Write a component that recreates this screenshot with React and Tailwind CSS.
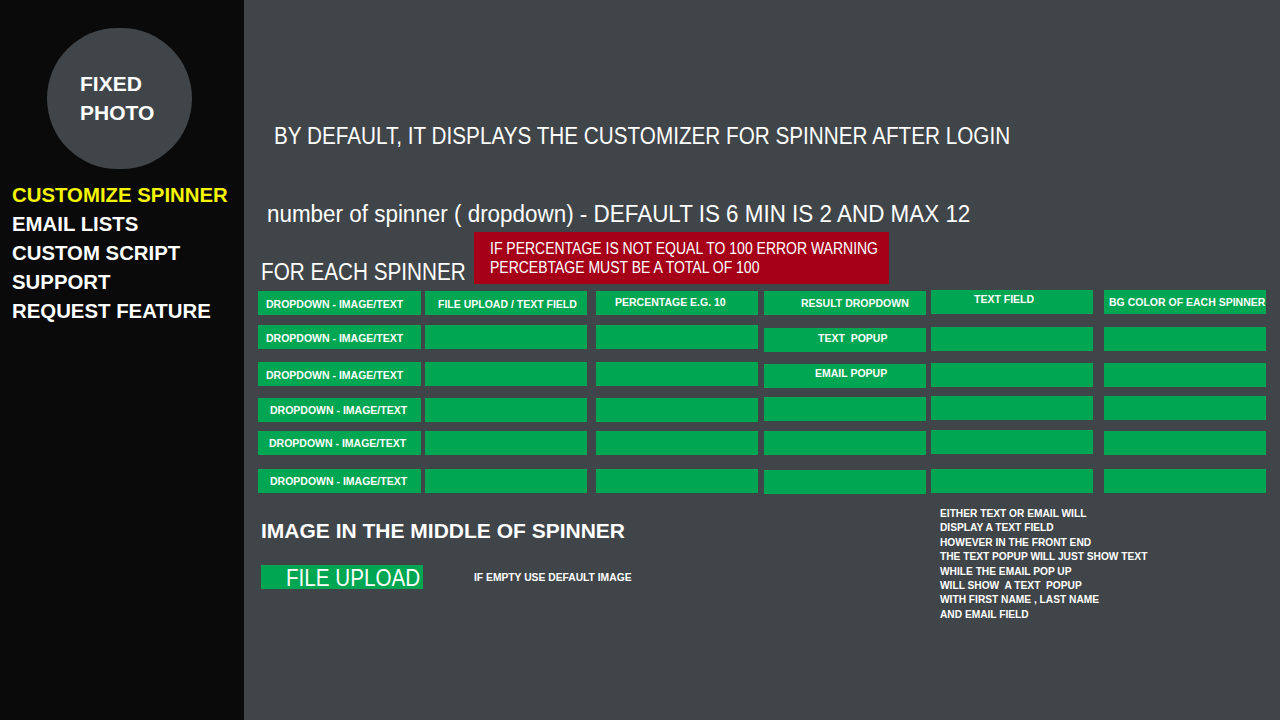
// each cell: [text, padding classes, small vertical nudge class]
const rows = [
  {
    top: "mt-[291px]",
    cells: [
      ["DROPDOWN - IMAGE/TEXT", "pl-[8px] pt-[3px]", ""],
      ["FILE UPLOAD / TEXT FIELD", "pl-[13px] pt-[3px]", ""],
      ["PERCENTAGE E.G. 10", "pl-[19px]", ""],
      ["RESULT DROPDOWN", "pl-[37px] pt-[1px]", ""],
      ["TEXT FIELD", "pl-[43px] pb-[4px]", "-translate-y-[1px]"],
      ["BG COLOR OF EACH SPINNER", "pl-[5px] pt-[2px]", "-translate-y-[1px]"],
    ],
  },
  {
    top: "mt-[10px]",
    cells: [
      ["DROPDOWN - IMAGE/TEXT", "pl-[8px] pt-[4px]", ""],
      ["", "", ""],
      ["", "", ""],
      ["TEXT  POPUP", "pl-[54px] pb-[3px]", "translate-y-[3px]"],
      ["", "", "translate-y-[2px]"],
      ["", "", "translate-y-[2px]"],
    ],
  },
  {
    top: "mt-[13px]",
    cells: [
      ["DROPDOWN - IMAGE/TEXT", "pl-[8px] pt-[3px]", ""],
      ["", "", ""],
      ["", "", ""],
      ["EMAIL POPUP", "pl-[51px] pb-[5px]", "translate-y-[2px]"],
      ["", "", "translate-y-[1px]"],
      ["", "", "translate-y-[1px]"],
    ],
  },
  {
    top: "mt-[12px]",
    cells: [
      ["DROPDOWN - IMAGE/TEXT", "pl-[12px] pt-[2px]", ""],
      ["", "", ""],
      ["", "", ""],
      ["", "", "-translate-y-[1px]"],
      ["", "", "-translate-y-[2px]"],
      ["", "", "-translate-y-[2px]"],
    ],
  },
  {
    top: "mt-[9px]",
    cells: [
      ["DROPDOWN - IMAGE/TEXT", "pl-[11px] pt-[2px]", ""],
      ["", "", ""],
      ["", "", ""],
      ["", "", ""],
      ["", "", "-translate-y-[1px]"],
      ["", "", ""],
    ],
  },
  {
    top: "mt-[14px]",
    cells: [
      ["DROPDOWN - IMAGE/TEXT", "pl-[12px] pt-[2px]", ""],
      ["", "", ""],
      ["", "", ""],
      ["", "", "translate-y-[1px]"],
      ["", "", ""],
      ["", "", ""],
    ],
  },
]

const colGaps = ["", "ml-[4px]", "ml-[9px]", "ml-[6px]", "ml-[5px]", "ml-[11px]"]

const navItems = ["CUSTOMIZE SPINNER", "EMAIL LISTS", "CUSTOM SCRIPT", "SUPPORT", "REQUEST FEATURE"]

const note = [
  "EITHER TEXT OR EMAIL WILL",
  "DISPLAY A TEXT FIELD",
  "HOWEVER IN THE FRONT END",
  "THE TEXT POPUP WILL JUST SHOW TEXT",
  "WHILE THE EMAIL POP UP",
  "WILL SHOW  A TEXT  POPUP",
  "WITH FIRST NAME , LAST NAME",
  "AND EMAIL FIELD",
]

function Cell({ text, pad, wide }) {
  return (
    <div
      className={`flex h-6 items-center whitespace-pre bg-[#00a651] text-[10.5px] font-bold text-white ${wide ? "w-[163px]" : "w-[162px]"} ${pad}`}
    >
      {text}
    </div>
  )
}

export default function App() {
  return (
    <div className="flex h-[720px] w-[1280px] overflow-hidden font-['Liberation_Sans',sans-serif] text-white">
      <aside className="flex w-[244px] shrink-0 flex-col bg-[#0a0a0a]">
        <div className="ml-[47px] mt-[28px] flex h-[141px] w-[145px] items-center rounded-full bg-[#3f4549] pl-[33px]">
          <p className="-mt-[2px] text-[21px] font-bold leading-[29px]">
            FIXED<br />PHOTO
          </p>
        </div>
        <nav className="ml-3 mt-[11px] flex flex-col text-[21px] font-bold leading-[29px]">
          {navItems.map((item, i) => (
            <span
              key={item}
              className={`origin-left scale-x-[0.97] whitespace-nowrap ${i === 0 ? "text-[#f5f500]" : "text-white"}`}
            >
              {item}
            </span>
          ))}
        </nav>
      </aside>

      <main className="relative flex-1 bg-[#3f4549]">
        <div className="flex flex-col items-start">
          <h1 className="ml-[30px] mt-[121px] origin-left scale-x-90 whitespace-nowrap text-[23px] leading-[30px]">
            BY DEFAULT, IT DISPLAYS THE CUSTOMIZER FOR SPINNER AFTER LOGIN
          </h1>
          <p className="ml-[23px] mt-[48px] origin-left scale-x-[0.975] whitespace-nowrap text-[23px] leading-[30px]">
            number of spinner ( dropdown) - DEFAULT IS 6 MIN IS 2 AND MAX 12
          </p>
        </div>

        <div className="absolute left-[230px] top-[232px] h-[52px] w-[415px] bg-[#a50018] px-4 pt-[7px] text-[16px] leading-[19px]">
          <p className="origin-left scale-x-[0.874] whitespace-nowrap">IF PERCENTAGE IS NOT EQUAL TO 100 ERROR WARNING</p>
          <p className="origin-left scale-x-[0.874] whitespace-nowrap">PERCEBTAGE MUST BE A TOTAL OF 100</p>
        </div>

        <h2 className="absolute left-[17px] top-[257px] origin-left scale-x-90 whitespace-nowrap text-[23px] leading-[30px]">
          FOR EACH SPINNER
        </h2>

        <div className="absolute left-[14px] top-0 flex flex-col">
          {rows.map((row, r) => (
            <div key={r} className={`flex items-start ${row.top}`}>
              {row.cells.map(([text, pad, nudge], c) => (
                <div key={c} className={`${colGaps[c]} ${nudge}`}>
                  <Cell text={text} pad={pad} wide={c === 0} />
                </div>
              ))}
            </div>
          ))}
        </div>

        <h2 className="absolute left-[17px] top-[516px] whitespace-nowrap text-[21px] font-bold leading-[30px]">
          IMAGE IN THE MIDDLE OF SPINNER
        </h2>

        <div className="absolute left-[17px] top-[565px] flex h-6 w-[162px] items-center bg-[#00a651] pl-[25px]">
          <span className="mt-[2px] origin-left scale-x-[0.897] whitespace-nowrap text-[23px] leading-none">FILE UPLOAD</span>
        </div>

        <p className="absolute left-[230px] top-[570px] whitespace-nowrap text-[10.3px] font-bold">
          IF EMPTY USE DEFAULT IMAGE
        </p>

        <div className="absolute left-[696px] top-[507px] flex flex-col text-[10.2px] font-bold leading-[14.4px]">
          {note.map((line) => (
            <span key={line} className="whitespace-pre">{line}</span>
          ))}
        </div>
      </main>
    </div>
  )
}
